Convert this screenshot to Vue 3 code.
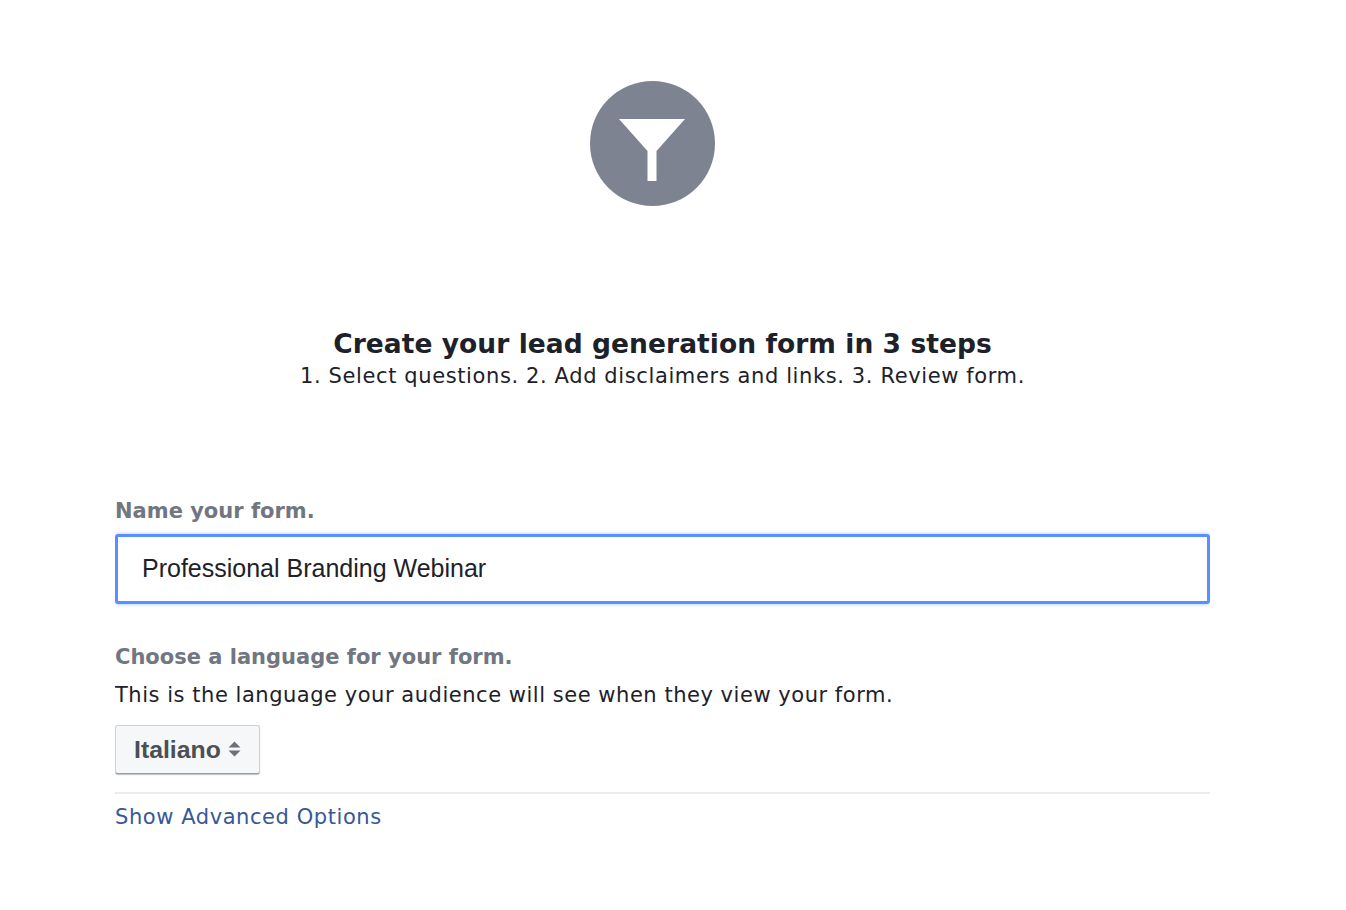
<script setup>
const title = 'Create your lead generation form in 3 steps'
</script>

<template>
  <main class="page">
    <div class="badge">
      <svg width="125" height="125" viewBox="0 0 125 125">
        <circle cx="62.5" cy="62.5" r="62.5" fill="#7e8391" />
        <path d="M29 38H95L66.500 70V100H57.500V70Z" fill="#fff" />
      </svg>
    </div>
    <header class="intro">
      <h1>{{ title }}</h1>
      <p>1. Select questions. 2. Add disclaimers and links. 3. Review form.</p>
    </header>
    <section class="form">
      <label class="label">Name your form.</label>
      <div class="input">Professional Branding Webinar</div>
      <label class="label second">Choose a language for your form.</label>
      <p class="help">This is the language your audience will see when they view your form.</p>
      <button class="select">
        <span>Italiano</span>
        <svg width="13" height="16" viewBox="0 0 13 16">
          <path d="M6.500 0.500L12.500 6.500H0.500Z M0.500 9.500H12.500L6.500 15.500Z" fill="#6b7079" />
        </svg>
      </button>
      <div class="rule"></div>
      <a class="more">Show Advanced Options</a>
    </section>
  </main>
</template>

<style scoped>
.page {
  width: 1095px;
  height: 910px;
  margin-left: 115px;
  padding-top: 81px;
  box-sizing: border-box;
  font-family: "DejaVu Sans", sans-serif;
  overflow: hidden;
}
.badge { margin-left: 475px; height: 125px; }
.badge svg { display: block; }
.intro { margin-top: 120px; text-align: center; }
h1 {
  margin: 0;
  font-size: 26.5px;
  line-height: 36px;
  letter-spacing: 0.05px;
  font-weight: 700;
  color: #1d2129;
}
.intro p {
  margin: 1px 0 0;
  font-size: 21px;
  line-height: 26px;
  letter-spacing: 0.61px;
  color: #1d2129;
}
.form { margin-top: 108px; }
.label {
  display: block;
  font-size: 21px;
  line-height: 28px;
  font-weight: 700;
  color: #717680;
}
.input {
  margin-top: 9px;
  height: 70px;
  box-sizing: border-box;
  border: 3px solid #5890ff;
  border-radius: 3px;
  box-shadow: 0 0 4px #a9c5ff;
  padding-left: 24px;
  font-family: "Liberation Sans", sans-serif;
  font-size: 25px;
  line-height: 62px;
  color: #1d2129;
}
.second { margin-top: 39px; }
.help {
  margin: 10px 0 0;
  font-size: 21px;
  line-height: 28px;
  letter-spacing: 0.53px;
  color: #1d2129;
}
.select {
  display: flex;
  align-items: center;
  gap: 7px;
  margin-top: 16px;
  width: 145px;
  height: 49px;
  padding: 0 0 0 18px;
  box-sizing: border-box;
  background: #f6f7f9;
  border: 1px solid #ced0d4;
  border-bottom-color: #9a9da3;
  border-radius: 3px;
  box-shadow: 0 1px 1px #bcbec2;
  font-family: "Liberation Sans", sans-serif;
  font-size: 24.8px;
  font-weight: 700;
  color: #4b4f56;
}
.select svg { margin-top: -2px; }
.rule { margin-top: 18px; height: 2px; background: #e9ebee; }
.more {
  display: block;
  margin-top: 9px;
  font-size: 21px;
  line-height: 28px;
  letter-spacing: 0.57px;
  color: #365899;
}
</style>
